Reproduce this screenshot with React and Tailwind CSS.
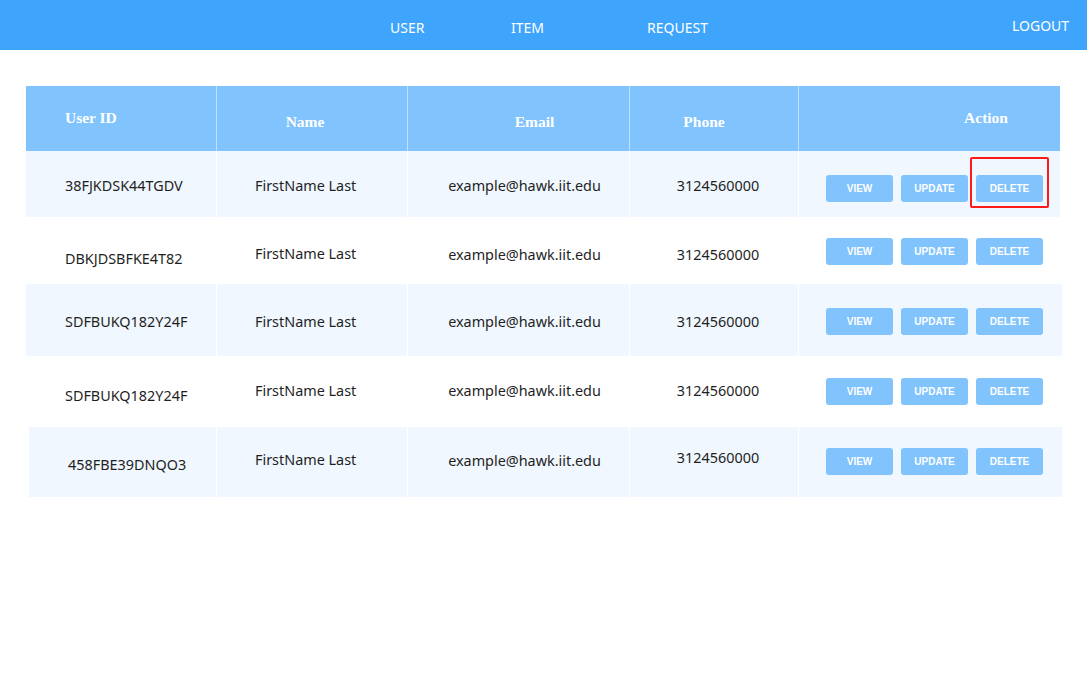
const rows = [
  { id: "38FJKDSK44TGDV", tint: true, h: "h-[66px]", ml: "ml-[26px]", w: "w-[1034px]", first: "w-[191px]", id_: "pt-[4px]", name: "pt-[4px]", email: "pt-[4px]", phone: "pt-[4px]", btn: "pt-[8px]", highlight: true },
  { id: "DBKJDSBFKE4T82", tint: false, h: "h-[67px]", ml: "ml-[26px]", w: "w-[1034px]", first: "w-[191px]", id_: "pt-[16px]", name: "pt-[6px]", email: "pt-[8px]", phone: "pt-[8px]", btn: "pt-[2px]" },
  { id: "SDFBUKQ182Y24F", tint: true, h: "h-[72px]", ml: "ml-[26px]", w: "w-[1036px]", first: "w-[191px]", id_: "pt-[4px]", name: "pt-[4px]", email: "pt-[4px]", phone: "pt-[4px]", btn: "pt-[2px]" },
  { id: "SDFBUKQ182Y24F", tint: false, h: "h-[71px]", ml: "ml-[26px]", w: "w-[1036px]", first: "w-[191px]", id_: "pt-[8px]", name: "pb-[2px]", email: "pb-[2px]", phone: "pb-[2px]", btn: "pt-0" },
  { id: "458FBE39DNQO3", tint: true, h: "h-[70px]", ml: "ml-[29px]", w: "w-[1033px]", first: "w-[188px] pl-[36px]", id_: "pt-[6px]", name: "pb-[4px]", email: "pb-[2px]", phone: "pb-[8px]", btn: "pb-[2px]" },
];

function ActionButton({ label }) {
  return (
    <button
      type="button"
      className="flex h-[27px] w-[67px] items-center justify-center rounded-[3px] bg-[#80c3fd] text-[10px] font-bold text-white [font-family:'Liberation_Sans',Arial,sans-serif]"
    >
      {label}
    </button>
  );
}

export default function App() {
  return (
    <div className="min-h-[683px] w-[1087px] bg-white [font-family:'Noto_Sans',sans-serif]">
      <nav className="relative flex h-[50px] items-center bg-[#3ea4fc] text-[14px] text-white">
        <span className="absolute left-[390px] top-[17px]">USER</span>
        <span className="absolute left-[511px] top-[17px]">ITEM</span>
        <span className="absolute left-[647px] top-[17px]">REQUEST</span>
        <span className="absolute left-[1012px] top-[15px]">LOGOUT</span>
      </nav>

      <div className="pt-[36px]">
        <div className="ml-[26px] flex h-[65px] w-[1034px] bg-[#80c3fd] text-[15.5px] font-semibold text-white [font-family:'Liberation_Serif',serif]">
          <div className="flex w-[191px] items-center border-r border-white/50 pb-[2px] pl-[39px]">User ID</div>
          <div className="flex w-[191px] items-center justify-center border-r border-white/50 pr-[14px] pt-[6px]">Name</div>
          <div className="flex w-[222px] items-center justify-center border-r border-white/50 pl-[32px] pt-[6px]">Email</div>
          <div className="flex w-[169px] items-center justify-center border-r border-white/50 pr-[20px] pt-[6px]">Phone</div>
          <div className="flex flex-1 items-center justify-end pb-[2px] pr-[52px]">Action</div>
        </div>

        {rows.map((r, i) => (
          <div
            key={i}
            className={`${r.ml} ${r.w} ${r.h} flex text-[14.4px] text-[#1f1f1f] ${r.tint ? "bg-[#f0f7fe]" : "bg-white"}`}
          >
            <div className={`flex items-center border-r border-white pl-[39px] ${r.first} ${r.id_}`}>{r.id}</div>
            <div className={`flex w-[191px] items-center border-r border-white pl-[38px] ${r.name}`}>FirstName Last</div>
            <div className={`flex w-[222px] items-center justify-center border-r border-white pl-[12px] ${r.email}`}>example@hawk.iit.edu</div>
            <div className={`flex w-[169px] items-center justify-center border-r border-white pl-[8px] ${r.phone}`}>3124560000</div>
            <div className={`relative flex flex-1 items-center gap-[8px] pl-[27px] ${r.btn}`}>
              <ActionButton label="VIEW" />
              <ActionButton label="UPDATE" />
              <ActionButton label="DELETE" />
              {r.highlight && (
                <div className="pointer-events-none absolute left-[171px] top-[6px] h-[51px] w-[79px] rounded-[2px] border-2 border-[#ff1a1a]" />
              )}
            </div>
          </div>
        ))}
      </div>
    </div>
  );
}
